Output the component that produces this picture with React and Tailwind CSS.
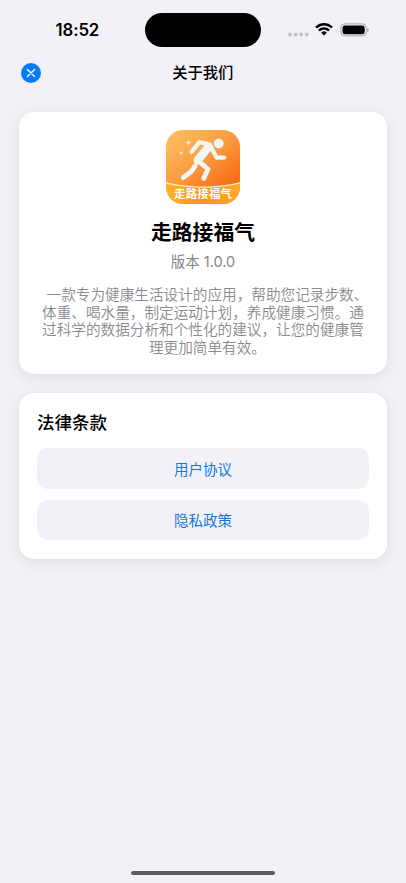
function StatusBar() {
  return (
    <header className="flex h-[47px] items-start justify-between pt-[13px]">
      <div className="w-[145px] pt-[4px] pl-[55.5px] font-['Inter','Liberation_Sans',sans-serif] text-[16.8px] leading-[26px] font-semibold tracking-[-0.1px]">
        18:52
      </div>
      <div className="h-[34px] w-[116px] rounded-full bg-black" />
      <div className="flex h-[34px] w-[145px] items-center pl-[27px]">
        <svg width="21" height="5" viewBox="0 0 21 5" className="mt-[8px] fill-[#c3c3ca]">
          <circle cx="2" cy="2.5" r="1.9" />
          <circle cx="7.6" cy="2.5" r="1.9" />
          <circle cx="13.1" cy="2.5" r="1.9" />
          <circle cx="18.7" cy="2.5" r="1.9" />
        </svg>
        <svg width="18" height="13" viewBox="0 0 17 12.3" className="-mt-px ml-[6px]">
          <path d="M8.5 2.4c2.4 0 4.7.95 6.4 2.6.14.13.35.13.48 0l1.24-1.25a.37.37 0 0 0 0-.53C12.1-1.07 4.9-1.07.38 3.22a.37.37 0 0 0 0 .53L1.62 5c.13.13.34.13.48 0A9.3 9.3 0 0 1 8.5 2.4Zm0 4.1c1.3 0 2.6.49 3.6 1.37.13.13.34.13.48 0l1.24-1.26a.37.37 0 0 0 0-.53 7.77 7.77 0 0 0-10.64 0 .37.37 0 0 0 0 .53l1.24 1.26c.14.13.35.13.48 0A5.4 5.4 0 0 1 8.5 6.5Zm2.48 2.97c.15-.15.15-.39-.02-.53a3.8 3.8 0 0 0-4.92 0c-.17.14-.17.38-.02.53l2.14 2.17c.19.19.49.19.68 0l2.14-2.17Z" />
        </svg>
        <svg width="29" height="14" viewBox="0 0 29 14" className="-mt-px ml-[6.5px]">
          <rect x=".9" y=".9" width="25.4" height="12" rx="3.7" fill="none" stroke="#a3a3a9" />
          <rect x="2.5" y="2.5" width="22.2" height="8.8" rx="2.4" />
          <path d="M27.4 5v4c.8-.3 1.3-1.1 1.3-2s-.5-1.7-1.3-2Z" fill="#a3a3a9" />
        </svg>
      </div>
    </header>
  );
}

function NavBar() {
  return (
    <nav className="flex h-[51px] items-center px-5">
      <button className="ml-[0.6px] flex h-5 w-5 items-center justify-center rounded-full bg-[#087cf8]" aria-label="关闭">
        <svg width="10" height="10" viewBox="0 0 10 10" stroke="white" strokeWidth="1.4" strokeLinecap="round">
          <path d="M1.4 1.4 8.6 8.6M8.6 1.4 1.4 8.6" />
        </svg>
      </button>
      <h1 className="flex-1 pt-[2px] pr-[21px] text-center text-[15.3px] font-medium">关于我们</h1>
    </nav>
  );
}

function AppLogo() {
  return (
    <svg width="74" height="74" viewBox="0 0 74 74" className="shrink-0">
      <defs>
        <linearGradient id="sky" x1="0" y1="0" x2=".8" y2="1">
          <stop offset="0" stopColor="#fdc265" />
          <stop offset=".45" stopColor="#fc9f43" />
          <stop offset=".85" stopColor="#f8701a" />
        </linearGradient>
        <linearGradient id="ribbon" x1="0" y1="0" x2="1" y2="0">
          <stop offset="0" stopColor="#fdb32c" />
          <stop offset=".5" stopColor="#f9921e" />
          <stop offset="1" stopColor="#fcab2d" />
        </linearGradient>
        <clipPath id="tile">
          <rect width="74" height="74" rx="17" />
        </clipPath>
      </defs>
      <g clipPath="url(#tile)">
        <rect width="74" height="74" fill="url(#sky)" />
        <path d="M0 53Q18 57.4 37 57.4T74 53V74H0Z" fill="url(#ribbon)" />
        <path d="M-1 52.6Q18 57.2 37 57.2T75 52.6" fill="none" stroke="#fff0c9" strokeWidth="1.3" />
        <circle cx="52.7" cy="13.6" r="4.9" fill="#f4f5f7" />
        <g fill="none" stroke="#f4f5f7" strokeLinecap="round" strokeLinejoin="round">
          <path d="M25.6 21.8 33.4 12.2 44 14.6 50.6 27.6 58.2 27.6" strokeWidth="4.3" />
          <path d="M41.8 17.8 31.8 30.2" strokeWidth="8.4" />
          <path d="M32.3 31 42 39 37.8 48.2" strokeWidth="4.8" />
          <path d="M29.2 35.8 25 41.8 17.2 47.6" strokeWidth="4.8" />
        </g>
        <path d="M22.5 9.4 23.4 11.8 25.8 12.7 23.4 13.6 22.5 16 21.6 13.6 19.2 12.7 21.6 11.8Z" fill="#ffedcf" />
        <path d="M15.2 20.4 16 22.2 17.8 23 16 23.8 15.2 25.6 14.4 23.8 12.6 23 14.4 22.2Z" fill="#ffe2b5" />
        <text x="37" y="68.4" textAnchor="middle" fill="white" fontSize="11.4" fontWeight="700" textLength="58">
          走路接福气
        </text>
      </g>
    </svg>
  );
}

function Card({ className, children }) {
  return (
    <section className={`mx-[19px] rounded-[15px] bg-white shadow-[0_3px_14px_rgba(0,0,0,0.09)] ${className}`}>
      {children}
    </section>
  );
}

function LinkButton({ children }) {
  return (
    <button className="flex h-[40.5px] w-full items-center justify-center rounded-[11px] bg-[#f2f1f7] pt-[3px] text-[14.5px] text-[#1279dc]">
      {children}
    </button>
  );
}

export default function App() {
  return (
    <main
      lang="zh-CN"
      className="flex h-[883px] w-[406px] flex-col overflow-hidden bg-[#f2f1f7] font-['Inter','Noto_Sans_CJK_SC',sans-serif] text-black"
    >
      <StatusBar />
      <NavBar />
      <Card className="mt-[13.5px] flex h-[262.5px] flex-col items-center pt-[18.5px]">
        <AppLogo />
        <h2 className="mt-[15px] text-[20.8px] leading-[28px] font-bold">走路接福气</h2>
        <p className="mt-[5px] text-[14.5px] leading-[20px] text-[#85858a]">版本 1.0.0</p>
        <p className="mt-[15px] text-center text-[14.63px] leading-[17.6px] font-[350] whitespace-nowrap text-[#8a8a8e]">
          <span className="block pl-[9px]">一款专为健康生活设计的应用，帮助您记录步数、</span>
          <span className="block">体重、喝水量，制定运动计划，养成健康习惯。通</span>
          <span className="block">过科学的数据分析和个性化的建议，让您的健康管</span>
          <span className="block pl-[9px]">理更加简单有效。</span>
        </p>
      </Card>
      <Card className="mt-[18.5px] flex h-[166px] flex-col px-[18px] pt-[18.5px]">
        <h3 className="text-[17.5px] leading-[24px] font-medium">法律条款</h3>
        <div className="mt-[13px] flex flex-col gap-[11px]">
          <LinkButton>用户协议</LinkButton>
          <LinkButton>隐私政策</LinkButton>
        </div>
      </Card>
      <footer className="mt-auto flex justify-center pb-[8px]">
        <div className="h-[4.5px] w-[144px] rounded-full bg-[#5d5d60]" />
      </footer>
    </main>
  );
}
